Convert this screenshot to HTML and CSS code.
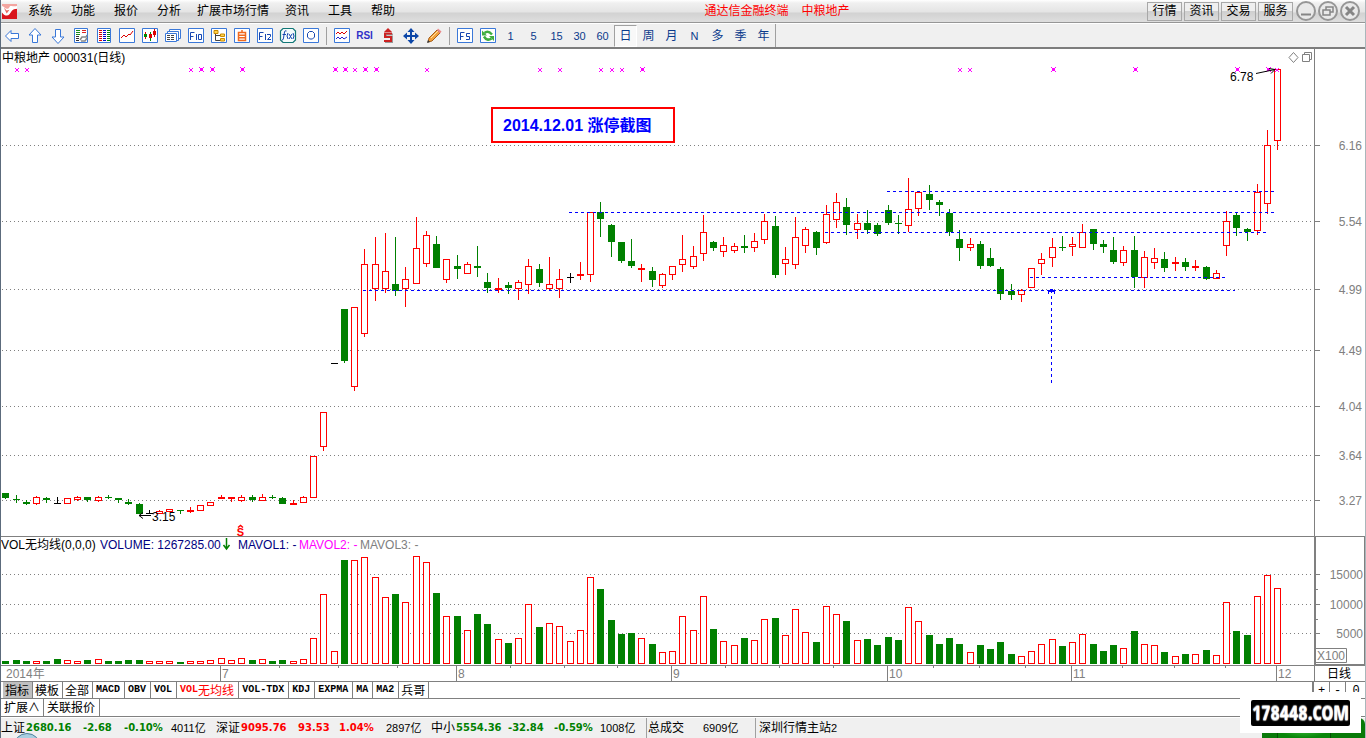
FILE: index.html
```html
<!DOCTYPE html>
<html lang="zh-CN">
<head>
<meta charset="utf-8">
<meta name="viewport" content="width=device-width, initial-scale=1">
<title>通达信金融终端 中粮地产</title>
<link rel="stylesheet" href="styles.css">
</head>
<body>
<div class="app">
  <header class="menubar">
    <svg class="logo" viewBox="0 0 16 16" aria-hidden="true">
      <rect width="16" height="16" fill="#d9151c"/>
      <path d="M0 0h16v5c-2-1-3-1-5 1-2 3-3 5-6 5-2 0-3-1-5-3z" fill="#f3a5a0"/>
      <path d="M0 2c2 0 4 4 6 3 3-1 1-3 4-3 2 0 3 1 6 0v3c-5 0-6 3-8 6-2 2-5 2-8-2z" fill="#fff"/>
      <path d="M2 4l3 3 3-1-3 4z" fill="#e8655f"/>
    </svg>
    <nav class="menu">
      <button>系统</button><button>功能</button><button>报价</button><button>分析</button><button class="wide">扩展市场行情</button><button>资讯</button><button>工具</button><button>帮助</button>
    </nav>
    <h1 class="caption"><span>通达信金融终端</span><span>中粮地产</span></h1>
    <div class="quick">
      <button>行情</button><button>资讯</button><button>交易</button><button>服务</button>
    </div>
    <div class="window-buttons">
      <button aria-label="最小化"><svg viewBox="0 0 20 20"><circle cx="10" cy="10" r="9"/><path d="M5 13.500h10" stroke-width="2"/></svg></button>
      <button aria-label="还原"><svg viewBox="0 0 20 20"><circle cx="10" cy="10" r="9"/><path d="M8 9V6h7v5h-3M5 9h7v5H5z" stroke-width="1.5"/></svg></button>
      <button aria-label="关闭"><svg viewBox="0 0 20 20"><circle cx="10" cy="10" r="9"/><path d="M6 6l8 8M14 6l-8 8" stroke-width="3"/></svg></button>
    </div>
  </header>

  <div class="toolbar">
    <button aria-label="后退"><svg viewBox="0 0 16 16"><path class="arrow" d="M1.500 8L7 2.500V5.500H14.500V10.500H7V13.500z"/></svg></button>
    <button aria-label="上移"><svg viewBox="0 0 16 16"><path class="arrow" d="M8 .5L14 7H10.500V14.500H5.500V7H2z"/></svg></button>
    <button aria-label="下移"><svg viewBox="0 0 16 16"><path class="arrow" d="M8 15.500L2 9H5.500V1.500H10.500V9H14z"/></svg></button>
    <button aria-label="自选"><svg viewBox="0 0 16 16"><path class="frame" d="M1.500.5h13v14h-13z"/><path stroke="#1a8a1a" d="M3 2.500h4M3 4.500h4M3 6.500h4"/><path stroke="#d22" d="M9 2.500h4M9 4.500h4"/><path stroke="#333" d="M3 8.500h3M3 10.500h3M3 12.500h3"/><path d="M7 12l2-3h4l1-2M8 13h4l2-3" fill="none" stroke="#888" stroke-width="1.500"/></svg></button>
    <button aria-label="行情列表"><svg viewBox="0 0 16 16"><path class="frame" d="M1.500.5h13v14h-13z"/><path stroke="#d00" stroke-width="3" stroke-dasharray="1 1" d="M4.500 2v11"/><path stroke="#00c" stroke-width="3" stroke-dasharray="1 1" d="M8.500 2v11"/><path stroke="#080" stroke-width="3" stroke-dasharray="1 1" d="M12.500 2v11"/></svg></button>
    <button aria-label="分时图"><svg viewBox="0 0 16 16"><path class="frame" d="M.5.5h15v14H.5z"/><path fill="none" stroke="#d00" d="M2 10l3-3 2 2 3-3 1 1 3-4"/></svg></button>
    <button aria-label="K线图"><svg viewBox="0 0 16 16"><path class="frame" d="M.5.5h15v14H.5z"/><path stroke="#d00" d="M3.500 4v7M12.500 1v8"/><path stroke="#080" d="M8.500 4v9"/><path stroke="#080" stroke-width="3" d="M3.500 6v3"/><path stroke="#d00" stroke-width="3" d="M8.500 6v4M12.500 3v4"/></svg></button>
    <button aria-label="成交明细"><svg viewBox="0 0 16 16"><path class="frame" d="M4.500 1.500h11v9h-11z"/><path class="frame" d="M2.500 3.500h11v9h-11z"/><path class="frame" d="M.5 5.500h11v8H.5z"/><path stroke="#444" stroke-dasharray="3 1" d="M2 7.500h8M2 9.500h8M2 11.500h8"/></svg></button>
    <button aria-label="F10"><svg viewBox="0 0 16 16"><path class="frame" d="M.5.5h15v14H.5z"/><path class="glyph" d="M2.500 12V4.500h4M2.500 8.500h3M8.500 6v6M10.500 6.500h3v5h-3z"/></svg></button>
    <button aria-label="板块树"><svg viewBox="0 0 16 16"><path class="frame" d="M.5.5h15v14H.5z"/><path fill="none" stroke="#444" d="M4.500 6v6.500H9M4.500 7.500H9"/><path fill="#ffd34d" stroke="#c98a00" d="M3 2.500h4v3H3zM9.500 6h4v2.500h-4zM9.500 10.500h4v2.500h-4z"/></svg></button>
    <button aria-label="自选股"><svg viewBox="0 0 16 16"><path class="frame" d="M.5.5h15v14H.5z"/><path fill="none" stroke="#f06a20" stroke-width="1.500" d="M4.500 4.500h7v8h-7zM4.500 7.200h7M4.500 9.800h7M8 2v2.500"/></svg></button>
    <button aria-label="F12"><svg viewBox="0 0 16 16"><path class="frame" d="M.5.5h15v14H.5z"/><path class="glyph" d="M2.500 12V4.500h4M2.500 8.500h3M8.500 6v6M10 6.500h3.500v2l-3 3H14"/></svg></button>
    <button aria-label="公式"><svg viewBox="0 0 16 16"><path d="M3 .5h10L15.500 3v9L13 14.500H3L.5 12V3z" fill="#f4fbfb" stroke="#177" stroke-width="1.200"/><path class="glyph" d="M6.500 3q-1.500-1-2 1l-1 6q0 2-1.500 2M2.500 6.500H6M8 5q-2 3 0 6M9 6l3 5M12 6l-3 5M13 5q2 3 0 6"/></svg></button>
    <button aria-label="圆"><svg viewBox="0 0 16 16"><path class="frame" d="M.5.5h15v14H.5z"/><path class="glyph" d="M6.500 3.500h3l2 2v3.500l-2 2h-3l-2-2V5.500z"/></svg></button>
    <i class="divider"></i>
    <button aria-label="多股"><svg viewBox="0 0 16 16"><path class="frame" d="M.5.5h15v14H.5z"/><path fill="none" stroke="#d00" d="M2 6l2-2 2 2 2-2 2 2 3-3"/><path fill="none" stroke="#22c" d="M2 11l2-2 2 2 2-2 2 2 3-2"/></svg></button>
    <button class="rsi">RSI</button>
    <button aria-label="除权"><svg viewBox="0 0 16 16"><path fill="#c22" d="M8 0l4 4H4z"/><path fill="none" stroke="#999" stroke-width="2" d="M13 6.500H6V9h6v5H5"/><path fill="none" stroke="#c22" stroke-width="2" d="M12 5.500H5V9h6v4H4"/></svg></button>
    <button aria-label="移动"><svg viewBox="0 0 16 16"><path fill="#0d47a8" d="M8 0l3.500 4H9v3h3V4.500L16 8l-4 3.500V9H9v3h2.500L8 16l-3.500-4H7V9H4v2.500L0 8l4-3.500V7h3V4H4.500z"/></svg></button>
    <button aria-label="画线"><svg viewBox="0 0 16 16"><path fill="#f3a23c" stroke="#a65e1a" d="M2 14l1-4 8-8 3 3-8 8z"/><path fill="#e98a8a" d="M11 2l1-1.500 3.500 3-1.500 2z"/><path stroke="#ffe0a0" d="M5 10l7-7"/><path fill="#333" d="M1 15l1-3 2 2z"/></svg></button>
    <i class="divider"></i>
    <button aria-label="F5"><svg viewBox="0 0 16 16"><path class="frame" d="M.5.5h15v14H.5z"/><path class="glyph" d="M3.500 12V4.500h4M3.500 8.500h3M13 5.500H9.500v3H12.500v3H9"/></svg></button>
    <button aria-label="刷新"><svg viewBox="0 0 16 16"><path class="frame" d="M.5.5h15v14H.5z"/><path fill="none" stroke="#3fae3f" stroke-width="2.500" d="M12 6.500Q8 2 4.500 5M4 8.500q3 5 7.500 2"/><path fill="#3fae3f" d="M2 2.500v5h5zM14 13V8H9z"/></svg></button>
    <button>1</button><button>5</button><button>15</button><button>30</button><button>60</button>
    <button class="cjk pressed">日</button><button class="cjk">周</button><button class="cjk">月</button><button>N</button><button class="cjk">多</button><button class="cjk">季</button><button class="cjk">年</button>
    <i class="end"></i>
  </div>

  <main class="chart">
    <svg id="chart" viewBox="0 49 1366 633" role="img" aria-label="中粮地产 000031 日线"></svg>
  </main>

  <nav class="tabs">
    <button class="cjk selected">指标</button><button class="cjk">模板</button><button class="cjk">全部</button><button>MACD</button><button>OBV</button><button>VOL</button><button class="current">VOL<b>无均线</b></button><button>VOL-TDX</button><button>KDJ</button><button>EXPMA</button><button>MA</button><button>MA2</button><button class="cjk">兵哥</button>
    <div class="scale"><button>+</button><button>-</button><button>0</button></div>
  </nav>
  <nav class="links">
    <button>扩展∧</button><button>关联报价</button>
  </nav>

  <footer class="status">
    <div class="index down"><span>上证</span><strong>2680.16</strong><strong>-2.68</strong><strong>-0.10%</strong><small>4011亿</small></div>
    <div class="index up"><span>深证</span><strong>9095.76</strong><strong>93.53</strong><strong>1.04%</strong><small>2897亿</small></div>
    <div class="index down small-cap"><span>中小</span><strong>5554.36</strong><strong>-32.84</strong><strong>-0.59%</strong><small>1008亿</small></div>
    <div class="total"><span>总成交</span><small>6909亿</small></div>
    <div class="server">深圳行情主站<small>2</small></div>
  </footer>
  <div class="orb"></div>
  <div class="green-badge"><i></i><i></i></div>
  <div class="watermark"><span>178448.COM</span></div>
</div>
<script src="chart.js"></script>
</body>
</html>
```
FILE: styles.css
```css
* { box-sizing: border-box; }

body {
  margin: 0;
  background: #fff;
  color: #000;
  font: 12px/16px "Liberation Sans", "Noto Sans CJK SC", sans-serif;
}

button {
  margin: 0;
  padding: 0;
  border: 0;
  background: none;
  color: inherit;
  font: inherit;
  white-space: nowrap;
}

.app {
  position: relative;
  display: flex;
  flex-direction: column;
  min-height: 100vh;
  overflow: hidden;
}

/* Window edge, drawn over the panes */
.app::after {
  content: "";
  position: absolute;
  inset: 0;
  border-left: 1px solid #5c6b7c;
  border-right: 1px solid #a9b7bb;
  pointer-events: none;
}

.menubar {
  display: flex;
  align-items: center;
  height: 23px;
  padding: 0 6px 0 2px;
  border-bottom: 1px solid #969696;
  background: linear-gradient(#fff 0, #f0f0f0 3px, #e4e4e4 12px, #d2d2d2 13px, #dedede 22px);
}

.logo { width: 15px; height: 15px; margin-right: 11px; }
.menu { display: flex; gap: 19px; }
.menu .wide { margin: 0 -3px; }

.caption {
  display: flex;
  gap: 13px;
  margin: 0 auto;
  padding-left: 12px;
  color: #f00;
  font-size: 12px;
  font-weight: 400;
}

.quick { display: flex; gap: 2px; margin-right: 3px; }

.quick button {
  width: 35px;
  height: 19px;
  border: 1px solid #a8a8a8;
  background: linear-gradient(#efefef 50%, #cfcfcf 50%, #dcdcdc);
  line-height: 17px;
}

.window-buttons { display: flex; gap: 2px; }
.window-buttons button, .window-buttons svg { display: block; width: 20px; height: 20px; }
.window-buttons svg { fill: none; stroke: #858585; }
.window-buttons circle { fill: #e9e9e9; stroke: #969696; stroke-width: 2; }

.toolbar {
  display: flex;
  align-items: center;
  height: 26px;
  border-top: 1px solid #fff;
  border-bottom: 2px solid #7d7d7d;
  background: #f0f0f0;
  color: #0a3a8c;
  font-size: 11px;
}

.toolbar button {
  flex: none;
  display: flex;
  align-items: center;
  justify-content: center;
  width: 23px;
  height: 22px;
}

.toolbar .cjk { font-size: 12px; }
.toolbar svg { width: 16px; height: 16px; overflow: visible; }
.toolbar .arrow { fill: #fff; stroke: #3a78d8; }
.toolbar .frame { fill: #fff; stroke: #3a78d8; }
.toolbar .glyph { fill: none; stroke: #1747b0; }
.toolbar .rsi { color: #3030c8; font-size: 10px; font-weight: 700; }
.toolbar .divider { width: 1px; height: 18px; margin: 0 3px 0 4px; background: #a0a0a0; }
.toolbar .end { width: 1px; align-self: stretch; background: #a0a0a0; }

.toolbar .pressed {
  border: 1px solid #fff;
  border-top-color: #a0a0a0;
  border-left-color: #a0a0a0;
  background: #f8f8f8;
}

.chart { flex: 1; }
.chart svg { display: block; width: 100%; height: auto; }
.chart .crisp { shape-rendering: crispEdges; }
.chart text { font-size: 12px; fill: #000; }
.chart .axis { fill: #808080; }
.chart .end { text-anchor: end; }
.chart .navy { fill: #000080; }
.chart .magenta { fill: #f0f; }
.chart .note { fill: #00f; font-size: 16px; font-weight: 700; }
.chart .rights { fill: #f00; font-size: 11px; font-weight: 700; text-anchor: middle; }

.tabs {
  display: flex;
  height: 17px;
  padding-left: 3px;
  border-bottom: 1px solid #808080;
  font: 700 10px/16px "Liberation Mono", "Noto Sans CJK SC", monospace;
}

.tabs button { height: 16px; padding: 0 4px 0 3px; border-right: 1px solid #808080; }
.tabs .cjk, .tabs b { font-family: "Noto Sans CJK SC", sans-serif; font-size: 12px; font-weight: 400; line-height: 16px; }
.tabs .cjk { padding: 0 3px 0 2px; }
.tabs .selected { background: #c0c0c0; }
.tabs .current { display: flex; color: #f00; }
.tabs .scale { display: flex; margin-left: auto; border-left: 2px solid #808080; }
.tabs .scale button { width: 16px; padding: 0; font-size: 12px; font-weight: 400; line-height: 18px; }
.tabs .scale button:last-child { width: 20px; border-right: 0; }

.links { display: flex; height: 18px; padding-left: 2px; border-bottom: 1px solid #808080; }
.links button { padding: 0 3px 0 2px; border-right: 1px solid #808080; }
.links button + button { padding: 0 4px 0 3px; }

.status {
  display: flex;
  height: 21px;
  padding-left: 1px;
  border-top: 1px solid #fff;
  background: #f0f0f0;
  line-height: 20px;
  white-space: nowrap;
}

.index { display: grid; grid-template-columns: 25px 57px 41px 47px 45px; }
.small-cap { grid-template-columns: 25px 52px 46px 46px 46px; }
.index strong { font: 700 10px/20px "DejaVu Sans", sans-serif; }
.status small { font-size: 11px; }
.up strong { color: #f00; }
.down strong { color: #008000; }
.total { display: grid; grid-template-columns: 55px 52px; padding-left: 1px; border-left: 1px solid #a0a0a0; }
.server { padding-left: 3px; border-left: 1px solid #a0a0a0; }

.orb {
  position: absolute;
  left: 13px;
  bottom: -23px;
  width: 28px;
  height: 28px;
  border: 1px solid #4d7f9c;
  border-radius: 50%;
  background: #a9cfe0;
}

.green-badge {
  position: absolute;
  right: 1px;
  bottom: 0;
  display: flex;
  width: 103px;
  height: 20px;
  overflow: hidden;
  border-radius: 8px 6px 0 0;
  background: #087a08;
}

.green-badge i { width: 16px; border-right: 1px solid #045004; background: #0a7a0a; }
.green-badge i + i { width: 53px; background: radial-gradient(#3fc03f, #0a860a 70%); }

.watermark {
  position: absolute;
  right: 5px;
  bottom: 5px;
  display: flex;
  align-items: center;
  justify-content: center;
  width: 121px;
  height: 41px;
  background: #fff;
}

.watermark span {
  padding: 0 1px;
  border-radius: 2px;
  background: #000;
  color: #fff;
  font: 700 20px/26px "Liberation Sans Narrow", "Open Sans Condensed", "Roboto Condensed", "Liberation Sans", sans-serif;
  text-shadow: 0 1px 1px #bbb, 0 -1px 1px #bbb;
}
```
FILE: chart.js
```javascript
// Candles: colour, high, body top, body bottom, low, volume top, volume colour (if it differs).
const candles = `
g 493 493 498 499 661
g 495 499 500 503 660
g 500 502 504 505 661
r 496 497 504 505 661
g 497 498 500 503 661
k 497 503 504 504 659 g
r 498 498 504 504 660
r 496 497 500 501 661
g 497 497 500 502 660
r 496 497 501 502 659
g 495 497 498 499 661
g 498 498 500 503 661
g 499 502 504 505 660
g 503 504 514 514 660
k 510 513 514 514 661 r
r 510 511 514 514 661
r 509 509 512 512 661
g 510 510 511 514 662
r 507 510 512 513 661
r 505 505 511 511 661
r 502 502 506 506 660
r 495 497 499 499 658
r 497 497 499 502 660
r 495 497 501 502 658
g 495 497 500 502 660
r 494 497 501 501 659
g 495 497 498 499 661
g 497 498 504 504 660
r 500 503 505 505 661
r 496 497 503 503 659
r 456 456 498 498 638
r 412 412 447 451 594
k 363 363 364 364 651 r
g 309 309 361 363 560
r 307 307 387 391 560
r 249 264 334 337 557
r 237 264 289 301 577
r 233 271 289 293 597
g 237 284 291 296 594
r 267 279 289 307 602
r 217 248 284 284 556
r 231 235 264 267 562
g 236 244 268 268 593
r 259 259 280 283 616
g 255 266 269 279 616
r 262 264 274 274 630
g 246 266 268 277 614
g 273 282 288 293 624
r 278 288 290 293 639
g 282 285 288 294 643
r 280 282 289 300 638
r 259 266 285 294 604
g 264 269 283 287 627
r 257 284 289 291 623
r 269 279 289 298 626
k 273 277 278 283 641 r
r 262 274 276 280 630
r 212 212 275 282 577
g 202 212 219 237 589
g 224 225 242 257 620
g 242 242 261 263 634
g 239 261 266 268 633
r 264 268 270 282 638
g 267 271 280 287 644
r 273 274 286 288 652
r 266 266 275 280 651
r 235 259 265 272 616
r 246 256 267 269 630
r 215 232 254 261 596
g 241 242 248 251 629
r 237 245 252 257 641
r 243 246 251 253 645
g 235 246 248 253 638
r 233 241 248 252 640
r 214 221 240 244 619
g 216 226 275 278 618
r 247 259 264 275 635
r 217 237 265 269 609
r 227 229 246 253 632
g 231 232 248 255 642
r 205 214 243 244 606
r 193 202 220 228 614
g 198 207 225 235 621
r 214 223 230 239 640
g 210 223 230 234 639
g 223 225 234 236 645
g 205 210 223 225 637
g 215 223 224 234 640
r 178 209 226 232 607
r 191 192 209 216 621
g 185 194 200 210 635
g 200 202 205 216 644
g 209 213 232 236 638
g 230 239 248 261 644
r 238 244 248 251 652
g 241 244 266 269 645
g 248 258 266 267 649
g 267 269 294 300 642
g 284 291 295 300 654
r 289 290 295 302 656
r 268 268 288 288 651
r 253 259 264 275 644
r 238 247 258 267 639
g 236 247 248 251 646
r 237 244 247 256 642
r 224 232 248 248 634
g 229 229 244 250 644
g 240 244 247 253 651
g 237 250 262 264 645
r 246 250 263 266 648
g 236 250 277 288 631
r 251 257 278 288 644
r 248 258 263 269 645
g 252 259 268 272 652
r 257 262 264 271 656
g 258 262 267 271 654
r 260 266 268 271 654
g 266 267 279 280 650
r 270 273 279 279 655
r 211 221 246 256 602
g 213 215 228 236 631
g 228 229 232 241 635
r 184 192 231 235 596
r 130 145 204 214 575
r 69 69 141 150 588`.trim().split('\n').map(line => line.split(' '));

const COLOURS = { g: '#008000', r: '#ff0000', k: '#000000' };
const GREY = '#808080';
const VOLUME_BASE = 664;
const STEP = 10.258;
const parts = [];

const rect = (x, y, w, h, fill) =>
  parts.push(`<rect x="${x}" y="${y}" width="${w}" height="${h}" fill="${fill}" class="crisp"/>`);
const path = (d, stroke, extra = '') =>
  parts.push(`<path d="${d}" fill="none" stroke="${stroke}" ${extra}/>`);
const text = (x, y, value, cls = '') =>
  parts.push(`<text x="${x}" y="${y}" class="${cls}">${value}</text>`);

function bar(x, top, bottom, colour, hollow) {
  rect(x - 3, top, 7, bottom - top, colour);
  if (hollow && bottom - top > 2) rect(x - 2, top + 1, 5, bottom - top - 2, '#fff');
}

// Grid and price axis
const grid = (y) => path(`M2 ${y + 0.5}H1314`, GREY, 'class="crisp" stroke-dasharray="1 3"');
[[145, '6.16'], [221, '5.54'], [289, '4.99'], [350, '4.49'], [406, '4.04'], [455, '3.64'], [500, '3.27']]
  .forEach(([y, label]) => {
    grid(y);
    rect(1315, y, 5, 1, GREY);
    text(1362, y + 5, label, 'axis end');
  });
[[574, '15000'], [604, '10000'], [633, '5000']].forEach(([y, label]) => {
  grid(y);
  rect(1316, y, 4, 1, GREY);
  text(1363, y + 5, label, 'axis end');
});
rect(1316, 589, 2, 1, GREY);
rect(1316, 619, 2, 1, GREY);

// Candles and volume
candles.forEach(([c, high, top, bottom, low, volume, vc], i) => {
  const x = Math.floor(i * STEP + 5.83);
  rect(x, +high, 1, low - high, COLOURS[c]);
  bar(x, +top, +bottom, COLOURS[c], c === 'r');
  bar(x, +volume, VOLUME_BASE, COLOURS[vc || c], (vc || c) === 'r');
});

// Trend lines
[[363, 1235, 290], [569, 1274, 212], [825, 1266, 232], [887, 1274, 191], [1030, 1225, 277]]
  .forEach(([x1, x2, y]) => path(`M${x1} ${y + 0.5}H${x2}`, '#0000ff', 'class="crisp" stroke-dasharray="3 3"'));
path('M1051.5 290V383', '#0000ff', 'class="crisp" stroke-dasharray="3 3"');
path('M1048.500 293.500v-2h2v-2h2v2h2v2', '#0000ff', 'class="crisp"');

// Information marks along the top
const large = [201, 212, 242, 335, 345, 365, 376, 642, 1053, 1135, 1237, 1268];
const small = [17, 27, 191, 355, 427, 540, 560, 601, 612, 622, 960, 970, 1277];
function mark(x, y, size) {
  const end = size - 1;
  [[0, 0], [end, 0], [0, end], [end, end]].forEach(([dx, dy]) => rect(x + dx, y + dy, 1, 1, '#ff00ff'));
  rect(x + 1, y + 1, size - 2, size - 2, '#ff00ff');
}
small.forEach(x => mark(x - 2, 68, 4));
large.forEach(x => mark(x - 2, 67, 5));

// Frame lines
rect(0, 536, 1366, 1, GREY);
rect(1314, 49, 1, 633, GREY);
rect(1314, 537, 2, 129, GREY);
rect(0, 665, 1366, 1, GREY);
rect(1314, 664, 52, 2, GREY);
rect(1364, 537, 1, 128, GREY);
rect(0, 681, 1366, 1, GREY);

// Date axis
[[220, '7'], [456, '8'], [671, '9'], [887, '10'], [1071, '11'], [1276, '12']].forEach(([x, month]) => {
  rect(x, 666, 1, 15, GREY);
  text(x + 2, 678, month, 'axis');
});
[279, 338, 397, 510, 564, 617, 725, 779, 833, 933, 979, 1025, 1122, 1174, 1225]
  .forEach(x => rect(x, 666, 1, 2, GREY));
text(6, 678, '2014年', 'axis');
text(1327, 678, '日线');
path('M1315.500 648.500h31v14h-31z', GREY);
text(1317, 660, 'X100', 'axis');

// Captions
text(2, 62, '中粮地产 000031(日线)');
text(1, 549, 'VOL无均线(0,0,0)');
text(100, 549, 'VOLUME: 1267285.00', 'navy');
path('M226.500 538v11M223.500 545l3 4 3-4', '#008000', 'stroke-width="1.500"');
text(238, 549, 'MAVOL1: -', 'navy');
text(299, 549, 'MAVOL2: -', 'magenta');
text(360, 549, 'MAVOL3: -', 'axis');

// High and low callouts
text(1230, 81, '6.78');
path('M1256 73.500L1275 69.500M1269 68.500l6 1-4 4', '#000');
text(152, 521, '3.15');
path('M151 515.500H139M143 512.500l-4 3 4 3', '#000');

// Ex-rights mark
text(240.5, 536, 'S', 'rights');
path('M238 527.500l2.500-2 2.500 2', '#ff0000', 'stroke-width="1.500"');

// Note
parts.push('<rect x="492" y="108" width="182" height="34" fill="#fff" stroke="#ff0000" stroke-width="2"/>');
text(503, 131, '2014.12.01 涨停截图', 'note');

// Pane controls
path('M1293.500 52.500l4.500 5-4.500 5-4.500-5z', GREY);
path('M1304.500 54.500v-2h7v7h-2M1302.500 54.500h7v7h-7z', GREY);

const svg = document.getElementById('chart');
svg.innerHTML = parts.join('');
```
